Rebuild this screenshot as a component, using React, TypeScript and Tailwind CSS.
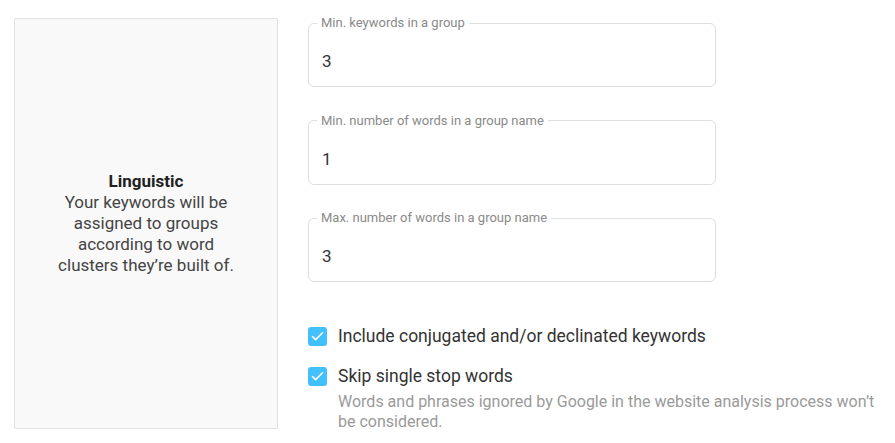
import { Check } from "lucide-react";

type FieldProps = {
  label: string;
  value: string;
};

function NumberField({ label, value }: FieldProps) {
  return (
    <fieldset className="w-[408px] rounded-[6px] border border-[#dedede] px-[13px] pb-[15px]">
      <legend className="-ml-[5px] px-[4px] text-[13px] leading-[14px] text-[#8a8a8a]">
        {label}
      </legend>
      <div className="pt-[21px] text-[17px] leading-[20px] text-[#333]">{value}</div>
    </fieldset>
  );
}

function CheckRow({ label, hint }: { label: string; hint?: string }) {
  return (
    <div className="flex items-start gap-[11px]">
      <span className="mt-[1px] flex h-[19px] w-[19px] shrink-0 items-center justify-center rounded-[3px] bg-[#42c0fb]">
        <Check size={15} strokeWidth={2.5} color="#fff" />
      </span>
      <div>
        <div className="text-[17.5px] leading-[20px] text-[#333]">{label}</div>
        {hint && (
          <p className="mt-[6px] w-[556px] text-[16px] leading-[20px] text-[#9a9a9a]">
            {hint}
          </p>
        )}
      </div>
    </div>
  );
}

export default function App() {
  return (
    <div className="flex h-[443px] w-[895px] bg-white pl-[14px] pt-[18px] font-['Roboto',sans-serif]">
      <div className="flex h-[411px] w-[264px] shrink-0 items-center justify-center rounded-[2px] border border-[#e2e2e2] bg-[#f9f9f9] px-[36px] text-center text-[17px] leading-[21px] text-[#444]">
        <div>
          <div className="font-bold text-[#222]">Linguistic</div>
          <div>Your keywords will be assigned to groups according to word clusters they’re built of.</div>
        </div>
      </div>

      <div className="ml-[30px] -mt-[2px] flex flex-col">
        <div className="flex flex-col gap-[26.5px]">
          <NumberField label="Min. keywords in a group" value="3" />
          <NumberField label="Min. number of words in a group name" value="1" />
          <NumberField label="Max. number of words in a group name" value="3" />
        </div>

        <div className="mt-[44px] flex flex-col gap-[20px]">
          <CheckRow label="Include conjugated and/or declinated keywords" />
          <CheckRow
            label="Skip single stop words"
            hint="Words and phrases ignored by Google in the website analysis process won’t be considered."
          />
        </div>
      </div>
    </div>
  );
}
